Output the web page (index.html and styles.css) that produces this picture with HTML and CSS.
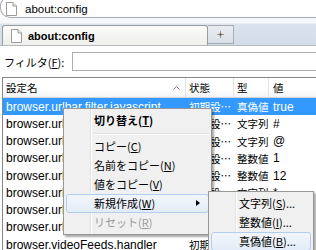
FILE: index.html
```html
<!DOCTYPE html>
<html>
<head>
    <title>about:config</title>
    <link rel="stylesheet" href="styles.css">
</head>
<body>
    <div class="urlbar">
        <svg class="page-icon" width="11" height="14" viewBox="0 0 11 14">
            <path d="M0.5 0.5 H7 L10.5 4 V13.5 H0.5 Z" fill="#fff" stroke="#9a9a9a"/>
            <path d="M7 0.5 V4 H10.5" fill="#eee" stroke="#9a9a9a"/>
        </svg>
        <span>about:config</span>
    </div>

    <div class="tabstrip">
        <div class="tab">
            <svg class="page-icon" width="11" height="14" viewBox="0 0 11 14">
                <path d="M0.5 0.5 H7 L10.5 4 V13.5 H0.5 Z" fill="#fff" stroke="#9a9a9a"/>
                <path d="M7 0.5 V4 H10.5" fill="#eee" stroke="#9a9a9a"/>
            </svg>
            <b>about:config</b>
        </div>
        <div class="newtab">
            <svg width="7" height="7" viewBox="0 0 7 7">
                <path d="M3.5 0 V7 M0 3.5 H7" stroke="#9a9a9a" stroke-width="1"/>
                <rect x="2.5" y="2.5" width="2" height="2" fill="#6b4a2a"/>
            </svg>
        </div>
    </div>

    <div class="content">
        <div class="filter">
            <label for="filter">フィルタ(<u>F</u>):</label>
            <input id="filter" type="text">
        </div>

        <div class="tree">
            <div class="row head">
                <div class="col name jp">設定名
                    <svg class="sort" width="7" height="4" viewBox="0 0 7 4"><path d="M0.5 3.5 L3.5 0.5 L6.5 3.5" fill="none" stroke="#6b8bb5"/></svg>
                </div>
                <div class="col state jp">状態</div>
                <div class="col type jp">型</div>
                <div class="col value jp">値</div>
            </div>
            <div class="row selected">
                <div class="col name">browser.urlbar.filter.javascript</div>
                <div class="col state jp">初期設定値</div>
                <div class="col type jp">真偽値</div>
                <div class="col value">true</div>
            </div>
            <div class="row">
                <div class="col name">browser.urlbar.match.title</div>
                <div class="col state jp">初期設定値</div>
                <div class="col type jp">文字列</div>
                <div class="col value">#</div>
            </div>
            <div class="row">
                <div class="col name">browser.urlbar.match.url</div>
                <div class="col state jp">初期設定値</div>
                <div class="col type jp">文字列</div>
                <div class="col value">@</div>
            </div>
            <div class="row">
                <div class="col name">browser.urlbar.matchBehavior</div>
                <div class="col state jp">初期設定値</div>
                <div class="col type jp">整数値</div>
                <div class="col value">1</div>
            </div>
            <div class="row">
                <div class="col name">browser.urlbar.maxRichResults</div>
                <div class="col state jp">初期設定値</div>
                <div class="col type jp">整数値</div>
                <div class="col value">12</div>
            </div>
            <div class="row">
                <div class="col name">browser.urlbar.restrict.bookmark</div>
                <div class="col state jp">初期設定値</div>
                <div class="col type jp">文字列</div>
                <div class="col value">*</div>
            </div>
            <div class="row">
                <div class="col name">browser.urlbar.restrict.history</div>
                <div class="col state jp">初期設定値</div>
                <div class="col type jp">文字列</div>
                <div class="col value">^</div>
            </div>
            <div class="row">
                <div class="col name">browser.urlbar.restrict.typed</div>
                <div class="col state jp">初期設定値</div>
                <div class="col type jp">文字列</div>
                <div class="col value">~</div>
            </div>
            <div class="row">
                <div class="col name">browser.videoFeeds.handler</div>
                <div class="col state jp">初期設定値</div>
                <div class="col type jp">文字列</div>
                <div class="col value">bloglines</div>
            </div>
        </div>
    </div>

    <!-- context menu -->
    <div class="menu main-menu">
        <div class="item bold">切り替え(<u>T</u>)</div>
        <div class="sep"></div>
        <div class="item">コピー(<u>C</u>)</div>
        <div class="item">名前をコピー(<u>N</u>)</div>
        <div class="item">値をコピー(<u>V</u>)</div>
        <div class="item hover">新規作成(<u>W</u>)<span class="arrow"></span></div>
        <div class="item disabled">リセット(<u>R</u>)</div>
    </div>

    <div class="menu sub-menu">
        <div class="item">文字列(<u>S</u>)...</div>
        <div class="item">整数値(<u>I</u>)...</div>
        <div class="item hover">真偽値(<u>B</u>)...</div>
    </div>
</body>
</html>
```

FILE: styles.css
```css
body { margin: 0; width: 316px; height: 250px; overflow: hidden; background: #fff; font-family: "Liberation Sans", "Noto Sans CJK JP", sans-serif; font-size: 12px; color: #000; position: relative; }
.jp { font-family: "Noto Sans CJK JP", sans-serif; font-size: 11px; }

.urlbar { height: 16px; margin-top: -4px; padding-top: 4px; display: flex; align-items: center; gap: 8px; padding-left: 5px; background: #fff; border: 1px solid #a5acb5; border-right: none; border-radius: 10px 0 0 10px; font-size: 11.5px; }

.tabstrip { height: 27px; display: flex; align-items: flex-end; background: linear-gradient(#f5f7fa 0, #f5f7fa 5px, #dbe3ee 6px, #d3dce8 100%); border-bottom: 1px solid #b4b9c0; padding-left: 2px; }
.tab { width: 196px; height: 19px; display: flex; align-items: center; gap: 6px; padding-left: 8px; background: linear-gradient(#fbfbfa, #efefec); border: 1px solid #9c9c9c; border-bottom: none; border-radius: 3px 3px 0 0; font-size: 11px; }
.newtab { width: 25px; height: 17px; margin-bottom: 1px; display: flex; align-items: center; justify-content: center; background: linear-gradient(#e8ecf1, #d9dfe7); border: 1px solid #a8adb4; border-left: none; }

.filter { display: flex; align-items: center; gap: 8px; padding: 6px 0 6px 4px; }
.filter label { white-space: nowrap; font-family: "Noto Sans CJK JP", sans-serif; font-size: 11px; }
.filter input { flex: 1; height: 19px; box-sizing: border-box; margin: 0 -4px 0 0; border: 1px solid #abadb3; padding: 0; }

.tree { margin-left: 2px; border-left: 1px solid #828790; border-top: 1px solid #828790; }
.tree .jp { font-size: 10.5px; }
.row { display: flex; height: 17.25px; align-items: center; }
.row.head { height: 20px; box-sizing: border-box; background: linear-gradient(#fff 0, #fff 60%, #f3f4f6 100%); border-bottom: 1px solid #d5d5d5; }
.col { box-sizing: border-box; padding-left: 3px; white-space: nowrap; overflow: hidden; text-overflow: ellipsis; }
.head .col { border-right: 1px solid #e3e4e6; height: 100%; display: flex; align-items: center; }
.name { width: 183px; position: relative; }
.state { width: 48px; }
.type { width: 35px; padding-left: 3px; text-overflow: clip; }
.value { flex: 1; padding-left: 4px; }
.head .value { border-right: none; }
.sort { position: absolute; right: 5px; top: 8px; }
.selected { background: #3399ff; color: #fff; }

.menu { position: absolute; background: #f0f0f0; border: 1px solid #979797; box-shadow: 2px 2px 2px rgba(0, 0, 0, 0.35); padding: 2px; font-family: "Noto Sans CJK JP", sans-serif; font-size: 11px; background-image: linear-gradient(to right, transparent 24px, #e2e3e3 24px, #e2e3e3 25px, #fff 25px, #fff 26px, transparent 26px); background-repeat: no-repeat; background-position: 2px 0; }
.main-menu { left: 63px; top: 108px; width: 143px; }
.sub-menu { left: 208px; top: 191px; width: 100px; }
.item { height: 19px; line-height: 17px; padding-left: 27px; position: relative; box-sizing: border-box; border: 1px solid transparent; border-radius: 3px; }
.item.bold { font-weight: bold; }
.item.hover { background: linear-gradient(#f2f6fb, #e3ecf7); border-color: #b1cef0; }
.item.disabled { color: #9a9a9a; }
.sep { height: 7px; margin-left: 28px; background: linear-gradient(#f0f0f0 3px, #e0e0e0 3px, #e0e0e0 4px, #fff 4px, #fff 5px, #f0f0f0 5px); }
.arrow { position: absolute; right: 8px; top: 5px; border-left: 4px solid #000; border-top: 3.5px solid transparent; border-bottom: 3.5px solid transparent; }
```
